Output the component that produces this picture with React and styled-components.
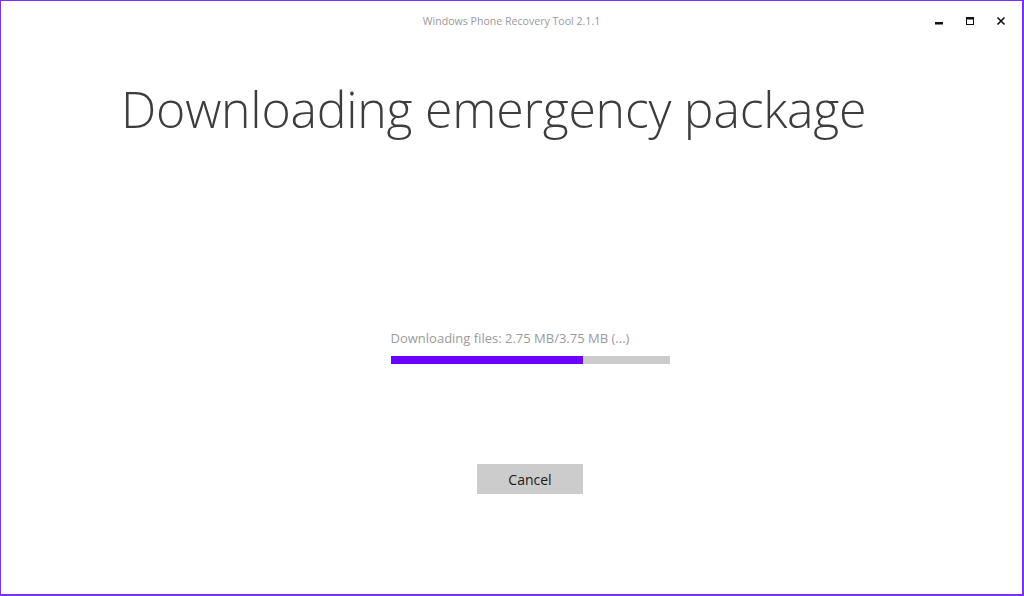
import React from "react";
import styled, { createGlobalStyle } from "styled-components";

const Global = createGlobalStyle`
  html, body { margin: 0; padding: 0; background: #fff; }
  body { font-family: "Open Sans", "Noto Sans", sans-serif; }
  * { box-sizing: border-box; }
`;

const Window = styled.div`
  width: 1024px;
  height: 596px;
  border: 1px solid #7b2ff7;
  border-right-width: 2px;
  border-bottom-width: 2px;
  background: #fff;
  display: flex;
  flex-direction: column;
  overflow: hidden;
`;

const TitleBar = styled.div`
  height: 40px;
  display: grid;
  grid-template-columns: 1fr auto 1fr;
  align-items: center;
`;

const Title = styled.div`
  grid-column: 2;
  font-family: "Open Sans", sans-serif;
  font-size: 10.6px;
  color: #9a9a9a;
  margin-top: -1px;
`;

const Controls = styled.div`
  grid-column: 3;
  justify-self: end;
  display: flex;
  align-items: center;
  gap: 12px;
  padding-right: 12px;
`;

const CtrlBtn = styled.div`
  width: 19px;
  height: 19px;
  display: flex;
  align-items: center;
  justify-content: center;
`;

const Heading = styled.h1`
  margin: 36px 0 0 120px;
  font-family: "Open Sans", sans-serif;
  font-weight: 300;
  font-size: 50px;
  letter-spacing: -0.24px;
  line-height: 64px;
  color: #3d3d3d;
`;

const Body = styled.div`
  flex: 1;
  display: flex;
  flex-direction: column;
  align-items: center;
  padding-left: 37px;
  padding-top: 188px;
`;

const Progress = styled.div`
  width: 279px;
  display: flex;
  flex-direction: column;
`;

const Status = styled.div`
  font-family: "Open Sans", sans-serif;
  font-size: 13px;
  color: #9b9b9b;
  line-height: 18px;
  margin-bottom: 9px;
  white-space: nowrap;
`;

const Track = styled.div`
  height: 8px;
  background: #cccccc;
  display: flex;
`;

const Fill = styled.div`
  height: 100%;
  background: #6b00ff;
`;

const CancelButton = styled.button`
  margin-top: 100px;
  width: 106px;
  height: 30px;
  border: none;
  background: #cccccc;
  font-family: "Open Sans", sans-serif;
  font-size: 14px;
  color: #1a1a1a;
  padding: 0;
`;

export default function App() {
  const pct = (192 / 279) * 100;
  return (
    <>
      <Global />
      <Window>
        <TitleBar>
          <Title>Windows Phone Recovery Tool 2.1.1</Title>
          <Controls>
            <CtrlBtn>
              <svg width="10" height="10" viewBox="0 0 10 10">
                <rect x="1" y="6" width="8" height="2.5" fill="#111" />
              </svg>
            </CtrlBtn>
            <CtrlBtn>
              <svg width="10" height="10" viewBox="0 0 10 10">
                <rect x="1.5" y="1.5" width="7" height="7" fill="none" stroke="#111" strokeWidth="1" />
                <rect x="1" y="1" width="8" height="2.5" fill="#111" />
              </svg>
            </CtrlBtn>
            <CtrlBtn>
              <svg width="10" height="10" viewBox="0 0 10 10">
                <path d="M1.5 1.5 L8.5 8.5 M8.5 1.5 L1.5 8.5" stroke="#111" strokeWidth="1.6" />
              </svg>
            </CtrlBtn>
          </Controls>
        </TitleBar>
        <Heading>Downloading emergency package</Heading>
        <Body>
          <Progress>
            <Status>Downloading files: 2.75 MB/3.75 MB (...)</Status>
            <Track>
              <Fill style={{ width: `${pct}%` }} />
            </Track>
          </Progress>
          <CancelButton>Cancel</CancelButton>
        </Body>
      </Window>
    </>
  );
}
